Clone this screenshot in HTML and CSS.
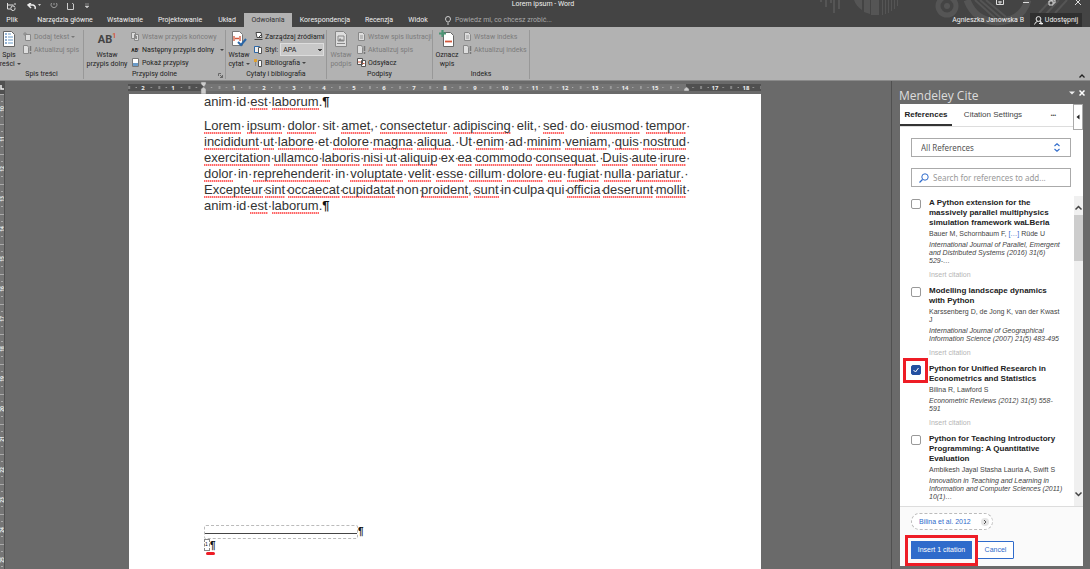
FILE: index.html
```html
<!DOCTYPE html>
<html lang="pl">
<head>
<meta charset="utf-8">
<title>Lorem ipsum - Word</title>
<link rel="stylesheet" href="styles.css">
</head>
<body>
<header class="top">
  <svg class="deco" width="270" height="27" viewBox="0 0 270 27" aria-hidden="true">
    <g stroke="#555" stroke-width="2"><path d="M1 0v2M6 0v7M11 0v3M14 0v13M19 0v9"/></g>
    <path fill="#555" d="M34 0h8v10q-6-4-8-10zM44 0h6v14l-6-2zM51 0h8v15h-8z"/>
    <path stroke="#555" stroke-width="1" d="M62.500 0v15M65.500 0v14M68.500 0v13M71.500 0v11M74.500 0v9M77.500 0v6"/>
    <circle cx="127" cy="6" r="9" fill="none" stroke="#555" stroke-width="5"/><circle cx="127" cy="6" r="3" fill="#555"/>
    <path d="M147 0q8 21 30 22 25-1 31-22" fill="none" stroke="#555" stroke-width="7"/>
    <path d="M155 0l22 20M160 0l22 19M166 0l20 17M231 0l-12 13M239 0l-14 15M247 0l-12 13" stroke="#555" stroke-width="2"/>
  </svg>
  <div class="titlebar">
    <div class="quick">
      <button aria-label="Zapisz"><svg width="12" height="8" viewBox="0 0 12 8"><path d="M1.500 0v6H5M1.500 2h6M9 0v2M5 5.500a2 2 0 0 1 4-1M9 5a2 2 0 0 1-4 1" fill="none" stroke="#ddd"/></svg></button>
      <button aria-label="Cofnij"><svg width="14" height="8" viewBox="0 0 14 8"><path d="M1 2h5q3 1 2 4M4 0L1 2l3 3" fill="none" stroke="#eee" stroke-width="1.500"/><path d="M11 1h3l-1.500 2z" fill="#ccc"/></svg></button>
      <button aria-label="Powtórz"><svg width="8" height="8" viewBox="0 0 8 8"><path d="M1.500 0a3 3 0 1 0 5 0M4 0v2" fill="none" stroke="#999"/></svg></button>
      <button aria-label="Nowy"><svg width="8" height="8" viewBox="0 0 8 8"><path d="M.5 0v6.500h6V1L5 0" fill="none" stroke="#ccc"/></svg></button>
      <button aria-label="Dostosuj"><svg width="6" height="8" viewBox="0 0 6 8"><path d="M1 1h4M1 3h4L3 5z" fill="#ccc" stroke="#ccc" stroke-width=".5"/></svg></button>
    </div>
    <h1>Lorem ipsum - Word</h1>
    <div class="winbtns">
      <button aria-label="Opcje wstążki"><svg width="8" height="6" viewBox="0 0 8 6"><path d="M.5 0v4.500h7V0M4 1v3M2 2h4" fill="none" stroke="#ddd"/></svg></button>
      <button aria-label="Minimalizuj"><svg width="8" height="6" viewBox="0 0 8 6"><path d="M1 2.500h6" stroke="#ddd"/></svg></button>
      <button aria-label="Przywróć"><svg width="8" height="6" viewBox="0 0 8 6"><path d="M1 1h4v4H1zM3 1V0h4v3H5" fill="none" stroke="#ddd"/></svg></button>
      <button aria-label="Zamknij"><svg width="8" height="6" viewBox="0 0 8 6"><path d="M1 -1l6 6M7 -1l-6 6" stroke="#ddd"/></svg></button>
    </div>
  </div>
  <div class="tabbar">
    <nav class="tabs">
      <button>Plik</button><button>Narzędzia główne</button><button>Wstawianie</button><button>Projektowanie</button><button>Układ</button><button class="active">Odwołania</button><button>Korespondencja</button><button>Recenzja</button><button>Widok</button>
    </nav>
    <label class="tell"><svg width="6" height="9" viewBox="0 0 6 9"><path d="M2 6Q.5 4 .5 3a2.500 2.500 0 0 1 5 0q0 1-1.500 3zM2 8h2" fill="none" stroke="#ccc"/></svg><input placeholder="Powiedz mi, co chcesz zrobić..." aria-label="Powiedz mi"></label>
    <span class="user">Agnieszka Janowska B</span>
    <button class="share"><svg width="9" height="9" viewBox="0 0 9 9"><circle cx="4.500" cy="3" r="2.400" fill="none" stroke="#eee"/><path d="M.5 8.500q1-3 3-3M6 5l2 3.500M5 7.500h4M7 5.500v3" fill="none" stroke="#eee"/></svg>Udostępnij</button>
  </div>
</header>

<section class="ribbon">
  <div class="group g1">
    <div class="tools">
      <button class="big"><svg width="14" height="18" viewBox="0 0 14 18"><path d="M1.500 1.500h8l3 3v12h-11z" fill="#fff" stroke="#666"/><path d="M3 4h2M3 7h2M3 10h2M3 13h2" stroke="#2b67a8"/><path d="M6 4h3M6 7h5M6 10h5M6 13h5" stroke="#6b9bc8"/></svg><span>Spis<br>treści <i class="caret"></i></span></button>
      <div class="stack">
        <button class="off"><svg viewBox="0 0 9 9"><path d="M2.500 2.500h5v6h-5z" fill="#ddd" stroke="#888"/><path d="M2 0v4M0 2h4" stroke="#888"/></svg>Dodaj tekst <i class="caret"></i></button>
        <button class="off"><svg viewBox="0 0 9 9"><path d="M.5 .5h4l1 2v6h-5z" fill="#ddd" stroke="#888"/><path d="M7.500 1v5M7.500 7v2" stroke="#777" stroke-width="1.500"/></svg>Aktualizuj spis</button>
      </div>
    </div>
    <h2>Spis treści</h2>
  </div>
  <div class="group g2">
    <div class="tools">
      <button class="big"><span class="ab">AB<sup>1</sup></span><span>Wstaw<br>przypis dolny</span></button>
      <div class="stack">
        <button class="off"><svg viewBox="0 0 9 9"><path d="M.5 .5h4v6h-4zM3.500 2.500h4v6h-4z" fill="#ddd" stroke="#888"/><path d="M5.500 4v3" stroke="#888"/></svg>Wstaw przypis końcowy</button>
        <button><span class="miniab">AB<b>¹</b></span>Następny przypis dolny<i class="caret far"></i></button>
        <button><svg viewBox="0 0 9 9"><path d="M1.500 .5h6v8h-6z" fill="#fff" stroke="#777"/><path d="M2 5h5v3H2z" fill="#6b9bc8"/></svg>Pokaż przypisy</button>
      </div>
    </div>
    <h2>Przypisy dolne</h2>
    <button class="launcher" aria-label="Opcje przypisów"><svg width="5" height="5" viewBox="0 0 5 5"><path d="M.5 3V.5H3M2 2l2.500 2.500M4.500 2v2.500H2" fill="none" stroke="#555" stroke-width=".8"/></svg></button>
  </div>
  <div class="group g3">
    <div class="tools">
      <button class="big"><svg width="16" height="18" viewBox="0 0 16 18"><path d="M1.500 1.500h7l3 3v11h-10z" fill="#fff" stroke="#777"/><path d="M3 6v5M9 6v5M4 8.500h4" stroke="#d4583c" stroke-width="1.300"/><path d="M7 12l3 3 5-6" fill="none" stroke="#2b67a8" stroke-width="2"/></svg><span>Wstaw<br>cytat <i class="caret"></i></span></button>
      <div class="stack">
        <button><svg viewBox="0 0 9 9"><path d="M2 .5h5l1 5H3zM.5 7.500h8" fill="#fff" stroke="#444"/><path d="M4 6l4-4" stroke="#444"/></svg>Zarządzaj źródłami</button>
        <label class="style"><svg viewBox="0 0 9 9"><path d="M.5 1.500h5v6h-5z" fill="#eee" stroke="#2b67a8"/><path d="M4.500 2.500h3v6h-3z" fill="#fff" stroke="#555"/></svg>Styl:<select><option>APA</option></select></label>
        <button><svg viewBox="0 0 9 9"><path d="M0 1h3v3H0z" fill="#e0a030"/><path d="M1.500 4v4" stroke="#888"/><path d="M4.500 2.500h3v6h-3z" fill="#fff" stroke="#555"/></svg>Bibliografia <i class="caret"></i></button>
      </div>
    </div>
    <h2>Cytaty i bibliografia</h2>
  </div>
  <div class="group g4">
    <div class="tools">
      <button class="big off"><svg width="14" height="18" viewBox="0 0 14 18"><path d="M1.500 1.500h8l3 3v12h-11z" fill="#ddd" stroke="#888"/><path d="M4 6h6v5H4zM3 13.500h8" fill="none" stroke="#888"/><path d="M4 11l2-3 2 2 1-1 1 2z" fill="#888"/></svg><span>Wstaw<br>podpis</span></button>
      <div class="stack">
        <button class="off"><svg viewBox="0 0 9 9"><path d="M1.500 .5h4l2 2v6h-6z" fill="#ddd" stroke="#888"/><path d="M3 4h3M3 6h3" stroke="#999"/></svg>Wstaw spis ilustracji</button>
        <button class="off"><svg viewBox="0 0 9 9"><path d="M.5 .5h4l1 2v6h-5z" fill="#ddd" stroke="#888"/><path d="M7.500 1v5M7.500 7v2" stroke="#777" stroke-width="1.500"/></svg>Aktualizuj spis</button>
        <button><svg viewBox="0 0 9 9"><path d="M.5 .5h5v6h-5zM4.500 2.500h4v6h-4z" fill="#fff" stroke="#555"/><path d="M1 4h3M5.500 5.500h2" stroke="#d4583c"/></svg>Odsyłacz</button>
      </div>
    </div>
    <h2>Podpisy</h2>
  </div>
  <div class="group g5">
    <div class="tools">
      <button class="big"><svg width="16" height="18" viewBox="0 0 16 18"><path d="M4.500 2.500h7l3 3v11h-10z" fill="#fff" stroke="#666"/><path d="M3.500 0v7M0 3.500h7" stroke="#4d9475" stroke-width="2.200"/><path d="M6 11.500h7" stroke="#d4583c" stroke-width="1.800"/></svg><span>Oznacz<br>wpis</span></button>
      <div class="stack">
        <button class="off"><svg viewBox="0 0 9 9"><path d="M1.500 .5h4l2 2v6h-6z" fill="#ddd" stroke="#888"/><path d="M3 4h3M3 6h3" stroke="#999"/></svg>Wstaw indeks</button>
        <button class="off"><svg viewBox="0 0 9 9"><path d="M.5 .5h4l1 2v6h-5z" fill="#ddd" stroke="#888"/><path d="M7.500 1v5M7.500 7v2" stroke="#777" stroke-width="1.500"/></svg>Aktualizuj indeks</button>
      </div>
    </div>
    <h2>Indeks</h2>
  </div>
  <button class="collapse" aria-label="Zwiń wstążkę"><svg width="6" height="4" viewBox="0 0 6 4"><path d="M.5 3.500L3 1l2.500 2.500" fill="none" stroke="#222" stroke-width="1.300"/></svg></button>
</section>

<main class="work">
  <div class="vruler">
    <div class="corner"><svg width="5" height="5" viewBox="0 0 5 5"><path d="M1 0v4h4" fill="none" stroke="#eee" stroke-width="1.500"/></svg></div>
    <svg class="vscale" width="5" height="475" viewBox="0 0 5 475" aria-hidden="true">
      <defs><pattern id="vt" width="5" height="30" y="15" patternUnits="userSpaceOnUse"><path d="M1 7.500h2M0 15.500h4M1 22.500h2" stroke="#aaa"/></pattern></defs>
      <rect width="5" height="475" fill="url(#vt)"/>
      <g class="vnum"><text transform="translate(4 15) rotate(-90)">10</text><text transform="translate(4 45) rotate(-90)">11</text><text transform="translate(4 75) rotate(-90)">12</text><text transform="translate(4 105) rotate(-90)">13</text><text transform="translate(4 135) rotate(-90)">14</text><text transform="translate(4 165) rotate(-90)">15</text><text transform="translate(4 195) rotate(-90)">16</text><text transform="translate(4 225) rotate(-90)">17</text><text transform="translate(4 255) rotate(-90)">18</text><text transform="translate(4 285) rotate(-90)">19</text><text transform="translate(4 315) rotate(-90)">20</text><text transform="translate(4 345) rotate(-90)">21</text><text transform="translate(4 376) rotate(-90)">22</text><text transform="translate(4 406) rotate(-90)">23</text><text transform="translate(4 436) rotate(-90)">24</text><text transform="translate(4 466) rotate(-90)">25</text></g>
    </svg>
  </div>
  <div class="canvas">
    <div class="sheet">
      <svg class="hruler" width="633" height="13" viewBox="0 0 633 13" aria-hidden="true">
        <defs><pattern id="ht" x="76" width="30.100" height="7" y="3" patternUnits="userSpaceOnUse"><path d="M7.500 3v1M15.500 2v3M22.500 3v1" stroke="#bbb"/></pattern></defs>
        <rect y="3" width="633" height="7" fill="#505050"/><rect x="76" y="3" width="482" height="7" fill="#757575"/>
        <rect y="3" width="633" height="7" fill="url(#ht)"/>
        <g class="hnum"><text x="15" y="9">2</text><text x="45" y="9">1</text><text x="106" y="9">1</text><text x="136" y="9">2</text><text x="166" y="9">3</text><text x="196" y="9">4</text><text x="226" y="9">5</text><text x="256" y="9">6</text><text x="286" y="9">7</text><text x="317" y="9">8</text><text x="347" y="9">9</text><text x="377" y="9">10</text><text x="407" y="9">11</text><text x="437" y="9">12</text><text x="467" y="9">13</text><text x="497" y="9">14</text><text x="527" y="9">15</text><text x="587" y="9">17</text><text x="618" y="9">18</text></g>
        <path d="M73 1h5v2l-2 3-3-3zM73 10V8l2.500-2L78 8v5h-5zM556 10V8l2.500-2L561 8v2z" fill="#ccc" stroke="#777" stroke-width=".5"/>
      </svg>
      <article class="page">
        <p class="text">
          <span class="line end"><span>anim</span><s>·</s><span>id</span><s>·</s><u>est</u><s>·</s><u>laborum</u><span>.</span><b>¶</b></span>
        </p>
        <p class="text">
          <span class="line"><u>Lorem</u><s>·</s><u>ipsum</u><s>·</s><u>dolor</u><s>·</s><span>sit</span><s>·</s><u>amet</u><span>,</span><s>·</s><u>consectetur</u><s>·</s><u>adipiscing</u><s>·</s><span>elit,</span><s>·</s><u>sed</u><s>·</s><span>do</span><s>·</s><u>eiusmod</u><s>·</s><u>tempor</u><em>·</em></span>
          <span class="line"><u>incididunt</u><s>·</s><u>ut</u><s>·</s><u>labore</u><s>·</s><span>et</span><s>·</s><u>dolore</u><s>·</s><u>magna</u><s>·</s><u>aliqua</u><span>.</span><s>·</s><span>Ut</span><s>·</s><u>enim</u><s>·</s><span>ad</span><s>·</s><u>minim</u><s>·</s><u>veniam</u><span>,</span><s>·</s><u>quis</u><s>·</s><u>nostrud</u><em>·</em></span>
          <span class="line"><u>exercitation</u><s>·</s><u>ullamco</u><s>·</s><u>laboris</u><s>·</s><u>nisi</u><s>·</s><u>ut</u><s>·</s><u>aliquip</u><s>·</s><span>ex</span><s>·</s><u>ea</u><s>·</s><u>commodo</u><s>·</s><u>consequat</u><span>.</span><s>·</s><u>Duis</u><s>·</s><u>aute</u><s>·</s><u>irure</u><em>·</em></span>
          <span class="line"><u>dolor</u><s>·</s><span>in</span><s>·</s><u>reprehenderit</u><s>·</s><span>in</span><s>·</s><u>voluptate</u><s>·</s><u>velit</u><s>·</s><u>esse</u><s>·</s><u>cillum</u><s>·</s><u>dolore</u><s>·</s><u>eu</u><s>·</s><u>fugiat</u><s>·</s><u>nulla</u><s>·</s><u>pariatur</u><span>.</span><s>·</s></span>
          <span class="line"><u>Excepteur</u><s>·</s><u>sint</u><s>·</s><u>occaecat</u><s>·</s><u>cupidatat</u><s>·</s><span>non</span><s>·</s><u>proident</u><span>,</span><s>·</s><u>sunt</u><s>·</s><span>in</span><s>·</s><span>culpa</span><s>·</s><span>qui</span><s>·</s><u>officia</u><s>·</s><u>deserunt</u><s>·</s><u>mollit</u><em>·</em></span>
          <span class="line end"><span>anim</span><s>·</s><span>id</span><s>·</s><u>est</u><s>·</s><u>laborum</u><span>.</span><b>¶</b></span>
        </p>
        <footer class="notes">
          <div class="seprow"><span class="sep"></span><b>¶</b></div>
          <div class="note"><span class="ref">1</span><b>¶</b></div>
          <div class="mark"></div>
        </footer>
      </article>
    </div>
  </div>

  <aside class="pane">
    <div class="panehead"><h2>Mendeley Cite</h2>
      <button aria-label="Opcje okienka"><svg width="6" height="6" viewBox="0 0 6 6"><path d="M0 1.500h6L3 4.500z" fill="#eee"/></svg></button>
      <button aria-label="Zamknij okienko"><svg width="6" height="6" viewBox="0 0 6 6"><path d="M.5 .5l5 5M5.500 .5l-5 5" stroke="#fff" stroke-width="1.500"/></svg></button>
    </div>
    <div class="addin">
      <div class="ptabs"><button class="on">References</button><button>Citation Settings</button><button class="more">•••</button><button class="fold" aria-label="Fold"><svg width="4" height="6" viewBox="0 0 4 6"><path d="M3.500 .5v5L.5 3z" fill="#222"/></svg></button></div>
      <div class="filters">
        <div class="field"><select aria-label="Library"><option>All References</option></select><svg width="6" height="9" viewBox="0 0 6 9"><path d="M.5 3L3 .8 5.500 3M.5 6L3 8.200 5.500 6" fill="none" stroke="#2f6bcb" stroke-width="1.100"/></svg></div>
        <div class="field search"><svg width="10" height="10" viewBox="0 0 10 10"><circle cx="6" cy="4" r="3.200" fill="none" stroke="#2f6bcb"/><path d="M3.500 6.500L.5 9.500" stroke="#2f6bcb" stroke-width="1.200"/></svg><input placeholder="Search for references to add..." aria-label="Search for references"></div>
      </div>
      <div class="results">
        <ul class="list">
          <li><input type="checkbox" id="r1"><div><label for="r1">A Python extension for the<br>massively parallel multiphysics<br>simulation framework waLBerla</label><p class="who">Bauer M, Schornbaum F, <a href="#">[…]</a> Rüde U</p><p class="where">International Journal of Parallel, Emergent<br>and Distributed Systems (2016) 31(6)<br>529-…</p><button>Insert citation</button></div></li>
          <li><input type="checkbox" id="r2"><div><label for="r2">Modelling landscape dynamics<br>with Python</label><p class="who">Karssenberg D, de Jong K, van der Kwast<br>J</p><p class="where">International Journal of Geographical<br>Information Science (2007) 21(5) 483-495</p><button>Insert citation</button></div></li>
          <li><span class="ring"></span><input type="checkbox" id="r3" checked><div><label for="r3">Python for Unified Research in<br>Econometrics and Statistics</label><p class="who">Bilina R, Lawford S</p><p class="where">Econometric Reviews (2012) 31(5) 558-<br>591</p><button>Insert citation</button></div></li>
          <li><input type="checkbox" id="r4"><div><label for="r4">Python for Teaching Introductory<br>Programming: A Quantitative<br>Evaluation</label><p class="who">Ambikesh Jayal Stasha Lauria A, Swift S</p><p class="where">Innovation in Teaching and Learning in<br>Information and Computer Sciences (2011)<br>10(1)…</p></div></li>
        </ul>
        <div class="scroll"><svg width="9" height="6" viewBox="0 0 9 6"><path d="M1.500 4.500l3-3 3 3" fill="none" stroke="#444" stroke-width="1.500"/></svg><span class="thumb"></span><svg width="9" height="6" viewBox="0 0 9 6"><path d="M1.500 1.500l3 3 3-3" fill="none" stroke="#444" stroke-width="1.500"/></svg></div>
      </div>
      <div class="foot">
        <button class="chip">Bilina et al. 2012<i><svg width="4" height="6" viewBox="0 0 4 6"><path d="M1 1l2 2-2 2" fill="none" stroke="#555"/></svg></i></button>
        <div class="actions"><span class="ring"></span><button class="primary">Insert 1 citation</button><button class="cancel">Cancel</button></div>
      </div>
    </div>
  </aside>
</main>
</body>
</html>
```

FILE: styles.css
```css
* { box-sizing: border-box; }
body { margin: 0; height: 100vh; display: flex; flex-direction: column; overflow: hidden; background: #6a6a6a; font: 7px/10px Roboto, "Noto Sans", sans-serif; color: #222; }
button, input, select { font: inherit; color: inherit; background: none; border: 0; padding: 0; margin: 0; border-radius: 0; }
button { white-space: nowrap; }
h1, h2, p, ul { margin: 0; padding: 0; font: inherit; }
svg { display: block; flex: none; }
.caret { display: inline-block; border: 2px solid transparent; border-top-color: #444; border-bottom: 0; vertical-align: middle; }

/* title bar and tabs */
.top { position: relative; background: #444; color: #f0f0f0; flex: none; }
.deco { position: absolute; right: 0; top: 0; }
.titlebar, .tabbar { position: relative; display: flex; }
.titlebar { height: 13px; justify-content: space-between; }
.titlebar h1 { line-height: 9px; }
.quick { display: flex; gap: 9px; padding-left: 6px; width: 90px; }
.winbtns { display: flex; gap: 18px; padding-right: 8px; align-items: flex-start; }
.tabbar { height: 14px; align-items: stretch; line-height: 14px; }
.tabs { display: grid; grid-template-columns: 30px 70px 50px 60px 34px 48px 66px 42px 36px; }
.tabs button:first-child { padding-right: 6px; }
.tabs .active { background: #b2b2b2; color: #333; }
.tell { display: flex; align-items: center; gap: 4px; padding-left: 9px; }
.tell input { width: 120px; }
.tell input::placeholder { color: #aaa; opacity: 1; }
.user { margin-left: auto; padding-right: 6px; }
.share { display: flex; align-items: center; justify-content: center; gap: 2px; width: 52px; background: #303030; margin-right: 8px; }

/* ribbon */
.ribbon { position: relative; display: flex; flex: none; height: 54px; background: #b2b2b2; border-bottom: 1px solid #8a8a8a; }
.group { position: relative; display: flex; flex-direction: column; justify-content: space-between; margin: 3px 0 1px; border-right: 1px solid #989898; flex: none; }
.group h2 { text-align: center; line-height: 9px; }
.tools { display: flex; gap: 2px; }
.g1 { width: 84px; }
.g2 { width: 142px; }
.g3 { width: 101px; }
.g4 { width: 106px; }
.g5 { width: 97px; }
.big { display: flex; flex-direction: column; align-items: center; line-height: 9px; width: 28px; flex: none; }
.big > span:last-child { margin-top: 3px; }
.g1 .big { width: 21px; padding-right: 3px; }
.g2 .big { width: 44px; margin-left: 1px; }
.g3 .big { width: 26px; }
.ab { height: 18px; font-size: 11px; font-weight: 700; line-height: 20px; color: #444; }
.ab sup { font-size: 7px; line-height: 0; color: #d4583c; }
.stack { display: flex; flex-direction: column; }
.stack button, .style { display: flex; align-items: center; gap: 2px; height: 13px; }
.stack svg { width: 9px; height: 9px; }
.stack .far { margin-left: 4px; }
.off { color: #7c7c7c; }
.off .caret { border-top-color: #777; }
.miniab { font-size: 5px; font-weight: 700; width: 9px; }
.miniab b { color: #d4583c; }
.style select { appearance: none; width: 44px; height: 13px; padding-left: 2px; background: linear-gradient(#444, #444) 37px 5px / 4px 1px no-repeat, linear-gradient(#444, #444) 38px 6px / 2px 1px no-repeat, #c8c8c8; border: 1px solid #ddd; }
.launcher { position: absolute; right: 2px; bottom: 1px; }
.collapse { position: absolute; right: 5px; bottom: 2px; }

/* document */
.work { flex: 1; display: flex; min-height: 0; }
.vruler { width: 5px; flex: none; background: #757575; border-right: 1px solid #505050; overflow: hidden; }
.corner { height: 13px; padding-top: 4px; background: #505050; }
.vnum, .hnum { font: 700 6px "Open Sans", sans-serif; fill: #eee; text-anchor: middle; }
.vnum { font-size: 5px; }
.canvas { flex: 1; display: flex; justify-content: flex-start; padding-left: 123px; min-width: 0; }
.sheet { display: flex; flex-direction: column; width: 633px; flex: none; }
.page { flex: 1; display: flex; flex-direction: column; background: #fff; margin-left: 1px; padding: 0 72px 14px 75px; font: 13px/16px "Liberation Sans", Arial, sans-serif; color: #333; }
.text { margin-bottom: 8px; }
.line { display: flex; white-space: nowrap; height: 16px; }
.line u { text-decoration: none; background: repeating-linear-gradient(90deg, #f66 0 1px, #fbb 1px 2px) 0 100% / 100% 2px no-repeat; }
.line s { text-decoration: none; flex: 1 1 0; min-width: 0; width: 0; }
.line em { font-style: normal; width: 3px; }
.end s { flex: none; width: 4px; }
.end b { color: #111; }
.notes { margin-top: auto; color: #111; font-size: 10px; line-height: 14px; }
.seprow { display: flex; height: 14px; }
.sep { width: 154px; border: 1px dashed #bbb; border-radius: 2px; background: linear-gradient(#444, #444) 0 7px / 100% 1px no-repeat; }
.note { display: flex; height: 13px; }
.ref { width: 6px; height: 12px; border: 1px dashed #888; font-size: 5px; line-height: 8px; }
.mark { width: 9px; height: 3px; margin-left: 2px; border-radius: 2px; background: #ee1c25; }

/* task pane */
.pane { width: 199px; flex: none; display: flex; flex-direction: column; border-left: 1px solid #505050; padding: 0 7px 3px 8px; }
.panehead { display: flex; align-items: center; gap: 4px; height: 23px; margin-right: -2px; color: #ddd; font-family: "Open Sans", sans-serif; }
.panehead h2 { flex: 1; font-size: 12px; line-height: 16px; padding-top: 7px; margin-left: -1px; }
.addin { flex: 1; min-height: 0; display: flex; flex-direction: column; background: #fff; font: 8px/10px "Liberation Sans", Arial, sans-serif; }
.ptabs { display: flex; height: 23px; border-bottom: 1px solid #ddd; flex: none; }
.ptabs .on { width: 52px; font-weight: 700; border-bottom: 2px solid #333; padding-top: 2px; }
.ptabs button:nth-child(2) { width: 82px; color: #444; }
.ptabs .more { flex: 1; font-size: 5px; color: #444; }
.ptabs .fold { width: 10px; height: 26px; border: 1px solid #aaa; background: #fff; display: grid; place-items: center; }
.filters { display: grid; gap: 11px; padding: 11px 12px 9px 11px; font-family: "Noto Sans", sans-serif; color: #555; }
.field { display: flex; align-items: center; height: 19px; border: 1px solid #aaa; padding: 0 10px 0 9px; }
.field select { appearance: none; flex: 1; }
.search { padding-left: 7px; gap: 4px; }
.search input { flex: 1; min-width: 0; }
.search input::placeholder { color: #999; opacity: 1; }
.results { flex: 1; display: flex; min-height: 0; }
.list { flex: 1; list-style: none; padding: 2px 0 0 11px; overflow: hidden; }
.list li { position: relative; display: flex; gap: 8px; padding-bottom: 7px; }
.list input { appearance: none; flex: none; width: 10px; height: 10px; margin-top: 1px; border: 1px solid #999; border-radius: 2px; }
.list input:checked { border-color: #2450a0; background: url("data:image/svg+xml,%3Csvg xmlns='http://www.w3.org/2000/svg' viewBox='0 0 8 8'%3E%3Cpath d='M1.500 4l2 2 3-4' fill='none' stroke='white'/%3E%3C/svg%3E") center / 8px 8px no-repeat #2450a0; }
.list label { display: block; font-weight: 700; color: #222; }
.list div { white-space: nowrap; }
.list p, .list button { display: block; font-size: 7px; line-height: 8px; color: #444; }
.list .who { margin-top: 2px; }
.list .where { margin-top: 3px; font-style: italic; }
.list button { margin-top: 6px; color: #b5b5b5; }
.list a { color: #2f6bcb; text-decoration: none; }
.ring { position: absolute; border: 3px solid #ee1c25; pointer-events: none; }
.list .ring { left: -8px; top: -6px; width: 25px; height: 25px; }
.scroll { width: 9px; background: #f0f0f0; display: flex; flex-direction: column; align-items: center; padding: 9px 0; }
.thumb { width: 9px; height: 46px; margin: 4px 0 auto; background: #cdcdcd; }
.foot { flex: none; background: #fafafa; border-top: 1px solid #ddd; padding: 6px 11px 7px; font-size: 7px; }
.chip { display: flex; align-items: center; gap: 10px; height: 17px; padding: 0 3px 0 7px; border: 1px dashed #bbb; border-radius: 9px; background: #fff; color: #2f6bcb; }
.chip i { width: 8px; height: 8px; border-radius: 4px; background: #e5e5e5; display: grid; place-items: center; }
.actions { position: relative; display: flex; gap: 5px; margin-top: 11px; }
.actions button { height: 18px; border: 1px solid #2f6bcb; }
.actions .primary { width: 61px; background: #2f6bcb; color: #fff; }
.actions .cancel { width: 37px; background: #fff; color: #2f6bcb; border-radius: 0 1px 1px 0; }
.actions .ring { left: -6px; top: -6px; width: 73px; height: 31px; z-index: 1; }
```
